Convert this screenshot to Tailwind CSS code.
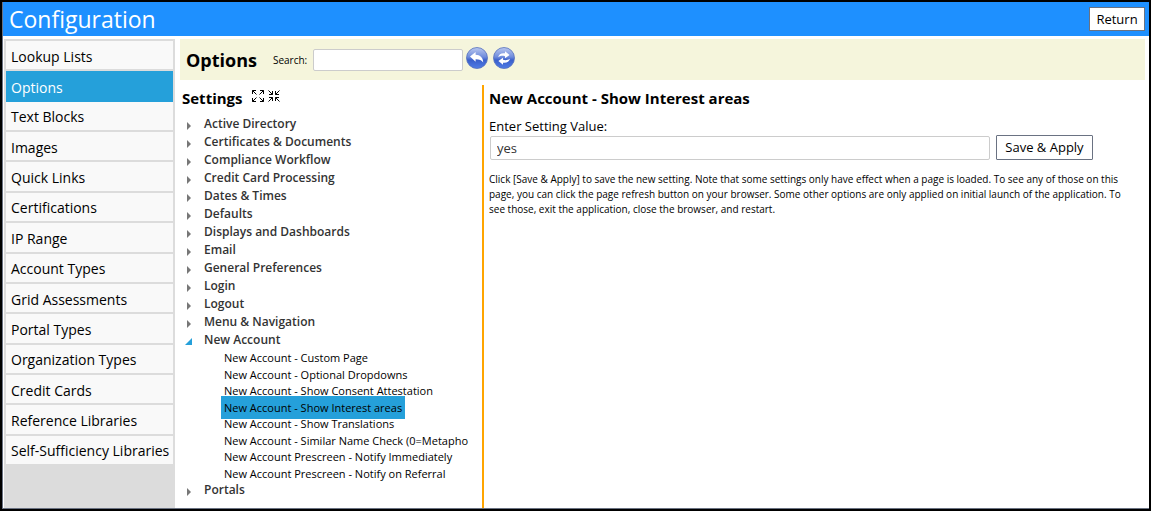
<!DOCTYPE html>
<html lang="en">
<head>
    <meta charset="UTF-8">
    <meta name="viewport" content="width=device-width, initial-scale=1.0">
    <title>Configuration</title>
    <script src="https://cdn.jsdelivr.net/npm/@tailwindcss/browser@4"></script>
</head>
<body class="bg-white text-black font-['Segoe_UI','Open_Sans',sans-serif]">
    <div class="min-h-screen flex flex-col border-2 border-black">
        <!-- Header -->
        <header class="flex items-center justify-between h-[34px] pl-[6px] pr-1 bg-[#1e90ff] border-l border-gray-500">
            <h1 class="text-[23px] leading-[34px] text-white">Configuration</h1>
            <button type="button" class="h-6 w-14 border border-gray-500 bg-white text-[13px] leading-5">Return</button>
        </header>

        <div class="flex flex-1 pt-[3px] border-l border-b border-gray-500">
            <!-- Sidebar -->
            <nav class="w-[171px] shrink-0 px-[2px] pt-[2px] ml-px bg-[#dcdcdc]">
                <ul class="grid auto-rows-fr h-[425px] text-[14px]">
                    <li class="pb-[2px]"><a href="#" class="flex items-center h-full pl-[5px] pt-[2px] whitespace-nowrap bg-[#f9f9f9]">Lookup Lists</a></li>
                    <li><a href="#" class="flex items-center h-full pl-[5px] pt-[2px] whitespace-nowrap bg-[#25a0da] text-white">Options</a></li>
                    <li class="pb-[2px]"><a href="#" class="flex items-center h-full pl-[5px] pt-[2px] whitespace-nowrap bg-[#f9f9f9]">Text Blocks</a></li>
                    <li class="pb-[2px]"><a href="#" class="flex items-center h-full pl-[5px] pt-[2px] whitespace-nowrap bg-[#f9f9f9]">Images</a></li>
                    <li class="pb-[2px]"><a href="#" class="flex items-center h-full pl-[5px] pt-[2px] whitespace-nowrap bg-[#f9f9f9]">Quick Links</a></li>
                    <li class="pb-[2px]"><a href="#" class="flex items-center h-full pl-[5px] pt-[2px] whitespace-nowrap bg-[#f9f9f9]">Certifications</a></li>
                    <li class="pb-[2px]"><a href="#" class="flex items-center h-full pl-[5px] pt-[2px] whitespace-nowrap bg-[#f9f9f9]">IP Range</a></li>
                    <li class="pb-[2px]"><a href="#" class="flex items-center h-full pl-[5px] pt-[2px] whitespace-nowrap bg-[#f9f9f9]">Account Types</a></li>
                    <li class="pb-[2px]"><a href="#" class="flex items-center h-full pl-[5px] pt-[2px] whitespace-nowrap bg-[#f9f9f9]">Grid Assessments</a></li>
                    <li class="pb-[2px]"><a href="#" class="flex items-center h-full pl-[5px] pt-[2px] whitespace-nowrap bg-[#f9f9f9]">Portal Types</a></li>
                    <li class="pb-[2px]"><a href="#" class="flex items-center h-full pl-[5px] pt-[2px] whitespace-nowrap bg-[#f9f9f9]">Organization Types</a></li>
                    <li class="pb-[2px]"><a href="#" class="flex items-center h-full pl-[5px] pt-[2px] whitespace-nowrap bg-[#f9f9f9]">Credit Cards</a></li>
                    <li class="pb-[2px]"><a href="#" class="flex items-center h-full pl-[5px] pt-[2px] whitespace-nowrap bg-[#f9f9f9]">Reference Libraries</a></li>
                    <li class="pb-[2px]"><a href="#" class="flex items-center h-full pl-[5px] pt-[2px] whitespace-nowrap bg-[#f9f9f9]">Self-Sufficiency Libraries</a></li>
                </ul>
            </nav>

            <main class="flex flex-col flex-1 min-w-0 pl-[5px] pr-1">
                <!-- Title bar -->
                <div class="flex items-center h-[41px] pl-[6px] bg-[#f5f5dc]">
                    <h2 class="text-[18px] font-bold pt-[2px]">Options</h2>
                    <label for="search" class="ml-4 pt-[2px] text-[10px]">Search:</label>
                    <input id="search" type="text" class="ml-[6px] w-[150px] h-[22px] px-1 rounded-[2px] border border-[#ccc] bg-white text-[11px]">
                    <button type="button" aria-label="Undo" class="ml-[3px] mb-[3px]">
                        <svg class="size-[22px]" viewBox="0 0 22 22">
                            <defs>
                                <linearGradient id="ball" x1="0" y1="0" x2="0" y2="1">
                                    <stop offset="0" stop-color="#b9c7ef"/>
                                    <stop offset="0.45" stop-color="#6f8cdc"/>
                                    <stop offset="0.6" stop-color="#3a5fcb"/>
                                    <stop offset="1" stop-color="#4f7ce6"/>
                                </linearGradient>
                            </defs>
                            <circle cx="11" cy="11" r="10.5" fill="url(#ball)" stroke="#5570bd" stroke-width="0.8"/>
                            <path d="M4 9.6 9.6 5v2.7c4.6.1 7.6 3 7.600 7.9-1.700-2.400-4-3.400-7.600-3.300v2.500z" fill="#fff"/>
                        </svg>
                    </button>
                    <button type="button" aria-label="Refresh" class="ml-[5px] mb-[3px]">
                        <svg class="size-[22px]" viewBox="0 0 22 22">
                            <circle cx="11" cy="11" r="10.5" fill="url(#ball)" stroke="#5570bd" stroke-width="0.8"/>
                            <path d="M5.2 10.3C5.600 7.300 8.700 5.600 12 6.300V4.200l4.600 3.700-4.600 3.400V9.200C9.300 8.500 7.500 8.800 5.200 10.300z" fill="#fff"/>
                            <path d="M16.8 11.7c-.4 3-3.500 4.700-6.800 4v2.100l-4.600-3.700 4.600-3.400v2.100c2.700.7 4.500.4 6.800-1.100z" fill="#fff"/>
                        </svg>
                    </button>
                </div>

                <div class="flex flex-1 pt-[5px]">
                    <!-- Settings tree -->
                    <section class="w-[302px] shrink-0 overflow-hidden pl-[2px]">
                        <div class="flex h-[30px]">
                            <h3 class="text-[15px] leading-[26px] font-bold">Settings</h3>
                            <button type="button" aria-label="Expand all" class="ml-[9px] mt-[5px] size-3">
                                <svg class="size-3" viewBox="0 0 12 12" fill="none" stroke="#000" stroke-width="1">
                                    <path d="M.5 4V.5H4M.5.5l4 4M8 .5h3.500V4M11.500.5l-4 4M.5 8v3.500H4M.5 11.500l4-4M8 11.500h3.500V8M11.500 11.500l-4-4"/>
                                </svg>
                            </button>
                            <button type="button" aria-label="Collapse all" class="ml-1 mt-[5px] size-3">
                                <svg class="size-3" viewBox="0 0 12 12" fill="none" stroke="#000" stroke-width="1">
                                    <path d="M1 4.500h3.500V1M4.500 4.500l-4-4M11 4.500H7.500V1M7.500 4.500l4-4M1 7.500h3.500V11M4.500 7.500l-4 4M11 7.500H7.500V11M7.500 7.500l4 4"/>
                                </svg>
                            </button>
                        </div>
                        <ul id="tree" class="text-[12px] leading-[18px] font-semibold text-[#333]"></ul>
                    </section>

                    <!-- Setting editor -->
                    <section class="flex-1 min-w-0 pl-[5px] pr-4 border-l-2 border-[#ffa500]">
                        <h3 class="text-[15px] leading-[26px] font-bold">New Account - Show Interest areas</h3>
                        <label for="value" class="block mt-[6px] text-[13px] leading-[18px]">Enter Setting Value:</label>
                        <div class="flex items-center gap-[6px]">
                            <input id="value" type="text" value="yes" class="ml-px w-[500px] h-6 px-[6px] rounded-[2px] border border-[#ccc] bg-white text-[13px] text-[#333]">
                            <button type="button" class="h-[25px] w-[97px] pt-px border border-gray-500 rounded-[1px] bg-white text-[13px] whitespace-nowrap">Save &amp; Apply</button>
                        </div>
                        <p class="mt-3 text-[10px] leading-[15px]">Click [Save &amp; Apply] to save the new setting. Note that some settings only have effect when a page is loaded. To see any of those on this page, you can click the page refresh button on your browser. Some other options are only applied on initial launch of the application. To see those, exit the application, close the browser, and restart.</p>
                    </section>
                </div>
            </main>
        </div>
    </div>

    <script>
        const tree = document.getElementById('tree');

        const groups = [
            'Active Directory', 'Certificates & Documents', 'Compliance Workflow', 'Credit Card Processing',
            'Dates & Times', 'Defaults', 'Displays and Dashboards', 'Email', 'General Preferences',
            'Login', 'Logout', 'Menu & Navigation', 'New Account', 'Portals'
        ];

        const newAccount = [
            'New Account - Custom Page',
            'New Account - Optional Dropdowns',
            'New Account - Show Consent Attestation',
            'New Account - Show Interest areas',
            'New Account - Show Translations',
            'New Account - Similar Name Check (0=Metapho',
            'New Account Prescreen - Notify Immediately',
            'New Account Prescreen - Notify on Referral'
        ];
        const selected = 'New Account - Show Interest areas';

        const closedArrow = '<svg class="w-[5px] h-2 ml-[5px] mt-[4px] mr-3" viewBox="0 0 5 8"><path d="M0 0l4 4-4 4z" fill="#777"/></svg>';
        const openArrow = '<svg class="w-[7px] h-[7px] ml-[3px] mt-[3px] mr-3" viewBox="0 0 7 7"><path d="M7 0v7H0z" fill="#25a0da"/></svg>';

        groups.forEach(name => {
            const open = name === 'New Account';
            const li = document.createElement('li');
            li.innerHTML = `
                <button type="button" class="flex items-center h-[18px]" aria-expanded="${open}">
                    ${open ? openArrow : closedArrow}
                    <span>${name.replace('&', '&amp;')}</span>
                </button>
                ${open ? `<ul class="grid auto-rows-fr h-[132px] pl-[39px] text-[11px] leading-[18px] font-normal text-black whitespace-nowrap">
                    ${newAccount.map(item => `<li class="h-4"><a href="#" class="px-[3px] py-1 ${item === selected ? 'bg-[#25a0da]' : ''}">${item}</a></li>`).join('')}
                </ul>` : ''}
            `;
            tree.appendChild(li);
        });
    </script>
</body>
</html>
